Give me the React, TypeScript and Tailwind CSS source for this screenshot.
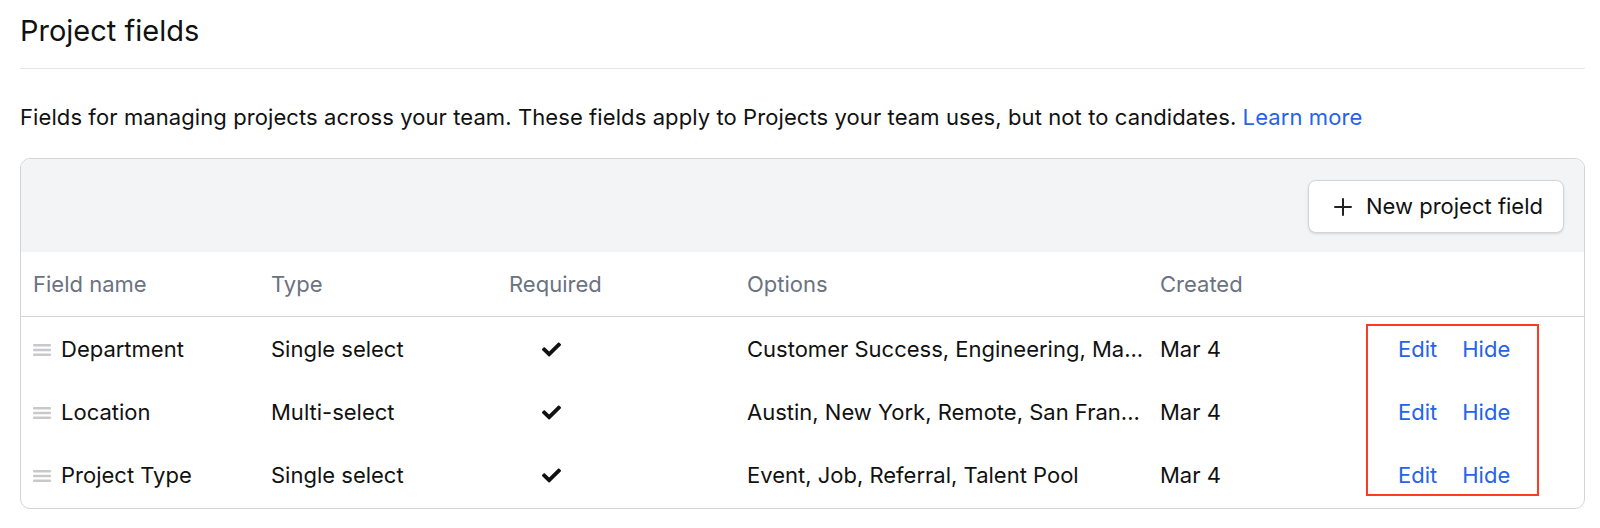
import React from "react";
import { FaCheck } from "react-icons/fa";

const rows = [
  { name: "Department", type: "Single select", options: "Customer Success, Engineering, Ma...", created: "Mar 4" },
  { name: "Location", type: "Multi-select", options: "Austin, New York, Remote, San Fran...", created: "Mar 4" },
  { name: "Project Type", type: "Single select", options: "Event, Job, Referral, Talent Pool", created: "Mar 4" },
];

function DragHandle() {
  return (
    <svg width="18" height="14" viewBox="0 0 18 14" className="shrink-0">
      <rect x="0" y="1" width="18" height="2.4" rx="1" fill="#c9c9cc" />
      <rect x="0" y="5.8" width="18" height="2.4" rx="1" fill="#c9c9cc" />
      <rect x="0" y="10.6" width="18" height="2.4" rx="1" fill="#c9c9cc" />
    </svg>
  );
}

export default function App() {
  const cols = "grid grid-cols-[238px_238px_238px_413px_238px_1fr] pl-3";
  return (
    <div className="bg-white min-h-[528px] text-[#111111]" style={{ fontFamily: "Inter, 'Noto Sans', sans-serif" }}>
      <div className="ml-5 w-[1565px]">
        <div className="pt-3 pb-[18px] border-b border-[#e5e7eb]">
          <h1 className="text-[29px] leading-[38px] font-normal">Project fields</h1>
        </div>
        <p className="mt-[33px] text-[22px] leading-[30px] tracking-[0.09px]">
          Fields for managing projects across your team. These fields apply to Projects your team uses, but not to candidates.{" "}
          <span className="text-[#2563eb]">Learn more</span>
        </p>
        <div className="mt-[26px] border border-[#d1d5db] rounded-[10px] overflow-hidden">
          <div className="bg-[#f3f4f6] h-[93px] flex items-start justify-end pt-[21px] pr-5">
            <button className="h-[53px] flex items-center gap-[14px] pl-[25px] pr-5 bg-white border border-[#d1d5db] rounded-lg shadow-sm text-[22px] text-[#111111]">
              <svg width="18" height="18" viewBox="0 0 18 18">
                <path d="M9 1v16M1 9h16" stroke="#222" strokeWidth="2" strokeLinecap="round" />
              </svg>
              New project field
            </button>
          </div>
          <div className={`${cols} h-[65px] items-center border-b border-[#d1d5db] text-[22px] text-[#6b7280]`}>
            <div>Field name</div>
            <div>Type</div>
            <div>Required</div>
            <div>Options</div>
            <div>Created</div>
            <div></div>
          </div>
          <div className="relative pt-px pb-px">
            {rows.map((r) => (
              <div key={r.name} className={`${cols} h-[63px] items-center text-[22px]`}>
                <div className="flex items-center gap-[10px]">
                  <DragHandle />
                  <span>{r.name}</span>
                </div>
                <div>{r.type}</div>
                <div className="pl-[33px]">
                  <FaCheck size={19} color="#111" />
                </div>
                <div className="whitespace-nowrap">{r.options}</div>
                <div>{r.created}</div>
                <div className="flex gap-[25px] text-[#2563eb]">
                  <span>Edit</span>
                  <span>Hide</span>
                </div>
              </div>
            ))}
            <div className="absolute left-[1345px] top-[7px] w-[173px] h-[172px] border-2 border-[#ff3b1f] pointer-events-none"></div>
          </div>
        </div>
      </div>
    </div>
  );
}
